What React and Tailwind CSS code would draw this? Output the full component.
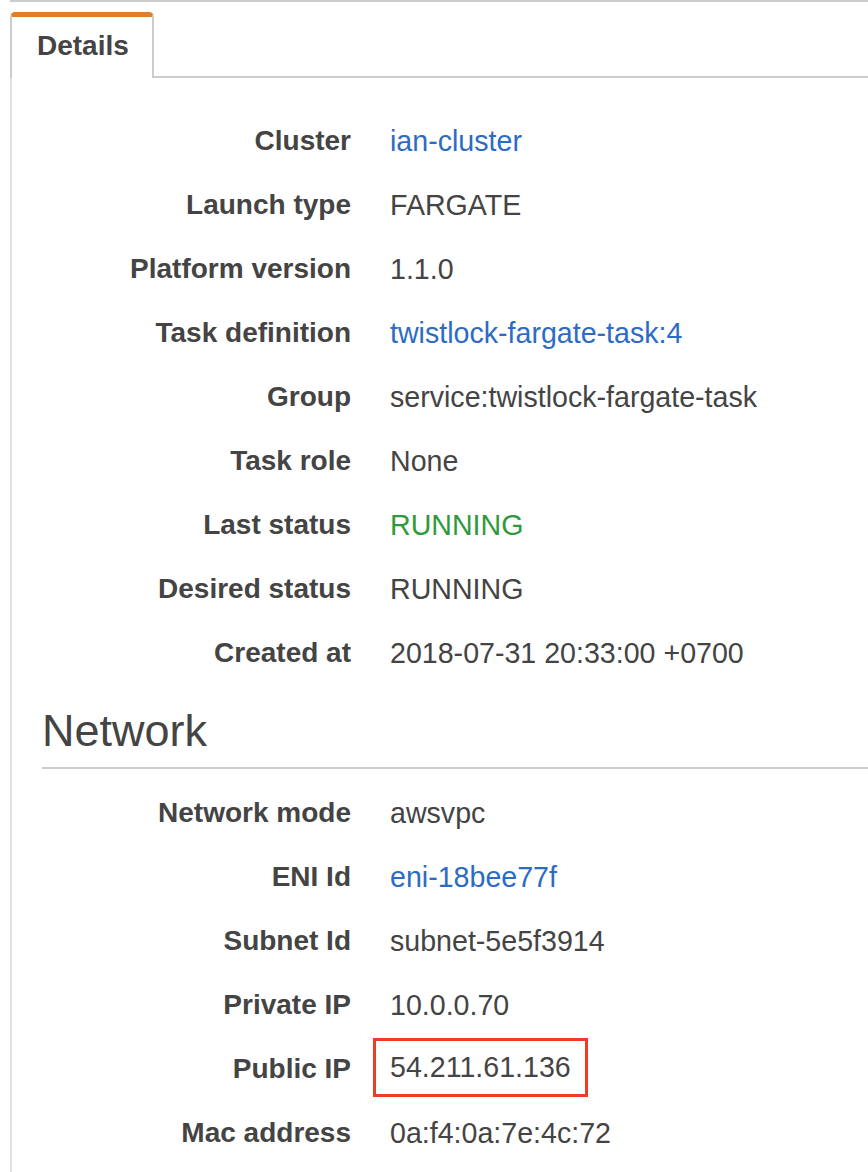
import React from "react";

const details = [
  ["Cluster", "ian-cluster", "link"],
  ["Launch type", "FARGATE"],
  ["Platform version", "1.1.0"],
  ["Task definition", "twistlock-fargate-task:4", "link"],
  ["Group", "service:twistlock-fargate-task"],
  ["Task role", "None"],
  ["Last status", "RUNNING", "green"],
  ["Desired status", "RUNNING"],
  ["Created at", "2018-07-31 20:33:00 +0700"],
];

const network = [
  ["Network mode", "awsvpc"],
  ["ENI Id", "eni-18bee77f", "link"],
  ["Subnet Id", "subnet-5e5f3914"],
  ["Private IP", "10.0.0.70"],
  ["Public IP", "54.211.61.136", "boxed"],
  ["Mac address", "0a:f4:0a:7e:4c:72"],
];

function Value({ value, kind }) {
  if (kind === "link") return <span className="text-[#2d6bc4]">{value}</span>;
  if (kind === "green") return <span className="text-[#2f9a3c]">{value}</span>;
  if (kind === "boxed")
    return (
      <span className="inline-block -ml-[17px] -mt-[2px] border-[3px] border-[#ee3b22] px-[14px] leading-[53px]">
        {value}
      </span>
    );
  return <span>{value}</span>;
}

function Rows({ rows }) {
  return (
    <div className="grid grid-cols-[339px_1fr] gap-x-[39px]">
      {rows.map(([label, value, kind]) => (
        <React.Fragment key={label}>
          <div className="h-[64px] flex items-center justify-end font-bold leading-[64px] pt-[1px]">{label}</div>
          <div className="h-[64px] flex items-center leading-[64px] pt-[1px] text-[28.6px]">
            <Value value={value} kind={kind} />
          </div>
        </React.Fragment>
      ))}
    </div>
  );
}

export default function App() {
  return (
    <div
      className="w-[868px] h-[1172px] bg-white overflow-hidden text-[#444] text-[28px]"
      style={{ fontFamily: '"Liberation Sans", Arial, sans-serif' }}
    >
      <div className="ml-[10px] border-t-2 border-[#cccccc]" />
      <div className="flex mt-[10px]">
        <div className="ml-[10px] w-[144px] h-[66px] border-x-2 border-t-[5px] border-[#cccccc] border-t-[#dd7f2c] rounded-t-[5px] pl-[25px] pt-[15px]">
          <span className="font-bold leading-[28px] block">Details</span>
        </div>
        <div className="flex-1 border-b-2 border-[#cccccc]" />
      </div>
      <div className="ml-[10px] border-l-2 border-[#e2e2e2] pt-[30px] pb-[20px]">
        <Rows rows={details} />
        <div className="ml-[30px] mt-[24px] border-b-2 border-[#cccccc] pb-[14px]">
          <h2 className="text-[45px] leading-[45px] font-normal">Network</h2>
        </div>
        <div className="mt-[11px]">
          <Rows rows={network} />
        </div>
      </div>
    </div>
  );
}
